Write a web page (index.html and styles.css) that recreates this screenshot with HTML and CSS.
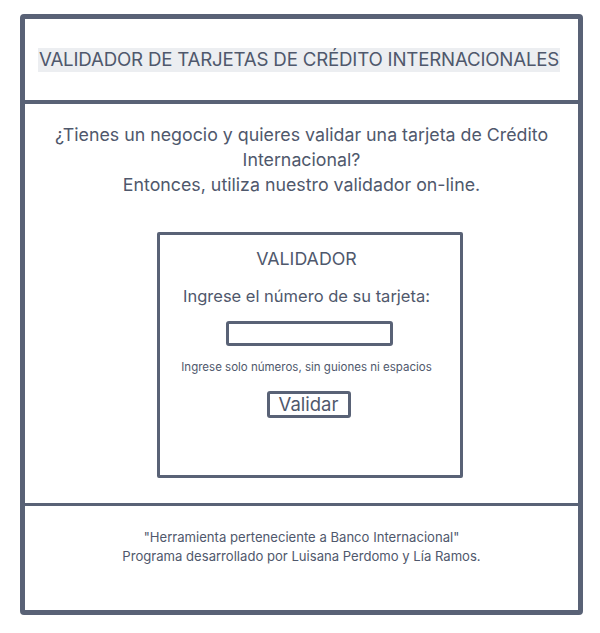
FILE: index.html
```html
<!DOCTYPE html>
<html lang="es">

<head>
    <meta charset="UTF-8">
    <meta name="viewport" content="width=device-width, initial-scale=1.0">
    <title>Validador de Tarjetas</title>
    <link rel="stylesheet" href="styles.css">
</head>

<body>
    <div class="frame">
        <header class="header">
            <h1 class="title">VALIDADOR DE TARJETAS DE CRÉDITO INTERNACIONALES</h1>
        </header>

        <main class="main">
            <p class="intro">
                ¿Tienes un negocio y quieres validar una tarjeta de Crédito Internacional?<br>
                Entonces, utiliza nuestro validador on-line.
            </p>

            <div class="validator">
                <h2 class="validator-title">VALIDADOR</h2>
                <p class="validator-label">Ingrese el número de su tarjeta:</p>
                <input class="card-input" type="text">
                <p class="hint">Ingrese solo números, sin guiones ni espacios</p>
                <button class="validate-btn">Validar</button>
            </div>
        </main>

        <footer class="footer">
            <p>"Herramienta perteneciente a Banco Internacional"</p>
            <p>Programa desarrollado por Luisana Perdomo y Lía Ramos.</p>
        </footer>
    </div>
</body>

</html>
```

FILE: styles.css
```css
:root {
    --line-color: #596276;
    --text-color: #4f586c;
    --highlight: #eceef1;
}

body,
html {
    margin: 0;
    padding: 0;
    background-color: white;
    color: var(--text-color);
    font-family: 'Inter', 'Liberation Sans', sans-serif;
}

.frame {
    box-sizing: border-box;
    width: 563px;
    height: 601px;
    margin: 14px 0 0 20px;
    border: 5px solid var(--line-color);
    border-radius: 4px;
    display: flex;
    flex-direction: column;
}

.header {
    height: 81px;
    border-bottom: 4px solid var(--line-color);
    display: flex;
    align-items: center;
    padding-left: 13px;
}

.title {
    margin: 0;
    font-size: 18.7px;
    font-weight: normal;
    line-height: 24px;
    background-color: var(--highlight);
    padding: 0 1px;
    letter-spacing: -0.2px;
}

.main {
    flex: 1;
    border-bottom: 3px solid var(--line-color);
    display: flex;
    flex-direction: column;
    align-items: center;
}

.intro {
    margin: 18px 0 0 0;
    width: 520px;
    text-align: center;
    font-size: 17.8px;
    line-height: 25px;
}

.validator {
    box-sizing: border-box;
    width: 306px;
    height: 246px;
    margin-top: 35px;
    margin-left: 16px;
    padding-right: 6px;
    border: 3px solid var(--line-color);
    border-radius: 2px;
    display: flex;
    flex-direction: column;
    align-items: center;
}

.validator-title {
    margin: 13px 0 0 0;
    font-size: 17.8px;
    font-weight: normal;
}

.validator-label {
    margin: 17px 0 0 0;
    font-size: 16.5px;
}

.card-input {
    box-sizing: border-box;
    width: 167px;
    height: 25px;
    margin: 15px 0 0 6px;
    border: 3px solid var(--line-color);
    border-radius: 3px;
    background: white;
}

.hint {
    margin: 14px 0 0 0;
    font-size: 11.5px;
}

.validate-btn {
    margin: 17px 0 0 4px;
    width: 84px;
    height: 27px;
    padding: 0;
    border: 3px solid var(--line-color);
    border-radius: 3px;
    background: white;
    color: var(--text-color);
    font-family: 'Inter', 'Liberation Sans', sans-serif;
    font-size: 18.5px;
    line-height: 19px;
}

.footer {
    height: 104px;
    padding-top: 22px;
    box-sizing: border-box;
    text-align: center;
    font-size: 13.1px;
    line-height: 19px;
}

.footer p {
    margin: 0;
}
```
